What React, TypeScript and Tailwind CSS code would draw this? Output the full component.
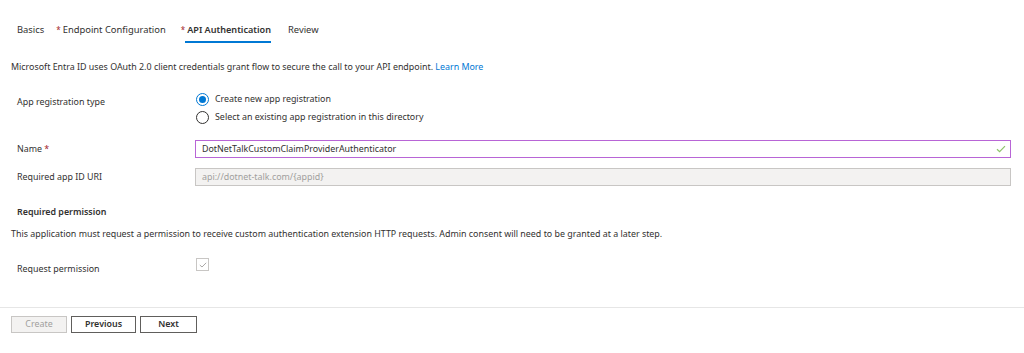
import React from "react";

export default function App() {
  const font = { fontFamily: '"Noto Sans", "Open Sans", sans-serif' };
  return (
    <div className="w-[1024px] h-[353px] bg-white text-[#323130] text-[8.9px] overflow-hidden flex flex-col" style={font}>
      {/* Tabs */}
      <div className="flex items-start pl-[17px] pt-[23px] h-[43px] text-[9.4px]">
        <div className="flex flex-col mr-[12px]">
          <span className="leading-[14px]">Basics</span>
        </div>
        <div className="flex flex-col mr-[15px]">
          <span className="leading-[14px]"><span className="text-[#a4262c] mr-[2px] text-[8px]">*</span>Endpoint Configuration</span>
        </div>
        <div className="flex flex-col mr-[17px]">
          <span className="leading-[14px] font-semibold text-[9.1px]"><span className="text-[#a4262c] mr-[2px] font-normal text-[8px]">*</span>API Authentication</span>
          <div className="h-[2px] bg-[#0078d4] ml-[4px] mt-[4px]" />
        </div>
        <div className="flex flex-col">
          <span className="leading-[14px]">Review</span>
        </div>
      </div>

      {/* Description */}
      <div className="pl-[11px] mt-[17px] leading-[14px]">
        Microsoft Entra ID uses OAuth 2.0 client credentials grant flow to secure the call to your API endpoint.{" "}
        <span className="text-[#0078d4]">Learn More</span>
      </div>

      {/* App registration type */}
      <div className="flex pl-[17px] mt-[18px]">
        <div className="w-[179px] pt-[3px] leading-[14px]">App registration type</div>
        <div className="flex flex-col gap-[4px]">
          <label className="flex items-center gap-[6px] leading-[14px]">
            <span className="w-[13px] h-[13px] rounded-full border border-[#0078d4] flex items-center justify-center">
              <span className="w-[7px] h-[7px] rounded-full bg-[#0078d4]" />
            </span>
            Create new app registration
          </label>
          <label className="flex items-center gap-[6px] leading-[14px]">
            <span className="w-[13px] h-[13px] rounded-full border border-[#323130]" />
            Select an existing app registration in this directory
          </label>
        </div>
      </div>

      {/* Name */}
      <div className="flex items-center pl-[17px] pr-[13px] mt-[16px]">
        <div className="w-[178px] leading-[14px]">
          Name <span className="text-[#a4262c]">*</span>
        </div>
        <div className="flex-1 h-[18px] border border-[#b865d6] flex items-center pl-[6px] pr-[4px] justify-between">
          <span>DotNetTalkCustomClaimProviderAuthenticator</span>
          <svg width="10" height="8" viewBox="0 0 10 8" fill="none">
            <path d="M1 4.2 L3.6 6.6 L9 1.2" stroke="#8dc46a" strokeWidth="1.2" />
          </svg>
        </div>
      </div>

      {/* Required app ID URI */}
      <div className="flex items-center pl-[17px] pr-[13px] mt-[10px]">
        <div className="w-[178px] leading-[14px]">Required app ID URI</div>
        <div className="flex-1 h-[18px] border border-[#c8c6c4] bg-[#f3f2f1] flex items-center pl-[6px] text-[#a19f9d]">
          api://dotnet-talk.com/{"{appid}"}
        </div>
      </div>

      {/* Required permission */}
      <div className="pl-[17px] mt-[19px] font-semibold leading-[14px]">Required permission</div>
      <div className="pl-[11px] mt-[8px] leading-[14px]">
        This application must request a permission to receive custom authentication extension HTTP requests. Admin consent will need to be granted at a later step.
      </div>

      {/* Request permission */}
      <div className="flex items-center pl-[17px] mt-[17px]">
        <div className="w-[179px] leading-[14px] pt-[4px]">Request permission</div>
        <span className="w-[13px] h-[13px] border border-[#c8c6c4] flex items-center justify-center -mt-[5px]">
          <svg width="8" height="6" viewBox="0 0 8 6" fill="none">
            <path d="M0.8 3 L3 5 L7.2 0.8" stroke="#a19f9d" strokeWidth="0.9" />
          </svg>
        </span>
      </div>

      {/* Footer */}
      <div className="mt-[31px] border-t border-[#e6e6e6] flex gap-[4px] pl-[11px] pt-[8px]">
        <button className="w-[56px] h-[17px] border border-[#c8c6c4] bg-[#f3f2f1] text-[#a19f9d] flex items-center justify-center leading-none">
          Create
        </button>
        <button className="w-[65px] h-[17px] border border-[#605e5c] bg-white font-semibold flex items-center justify-center leading-none">
          Previous
        </button>
        <button className="w-[57px] h-[17px] border border-[#605e5c] bg-white font-semibold flex items-center justify-center leading-none">
          Next
        </button>
      </div>
    </div>
  );
}
